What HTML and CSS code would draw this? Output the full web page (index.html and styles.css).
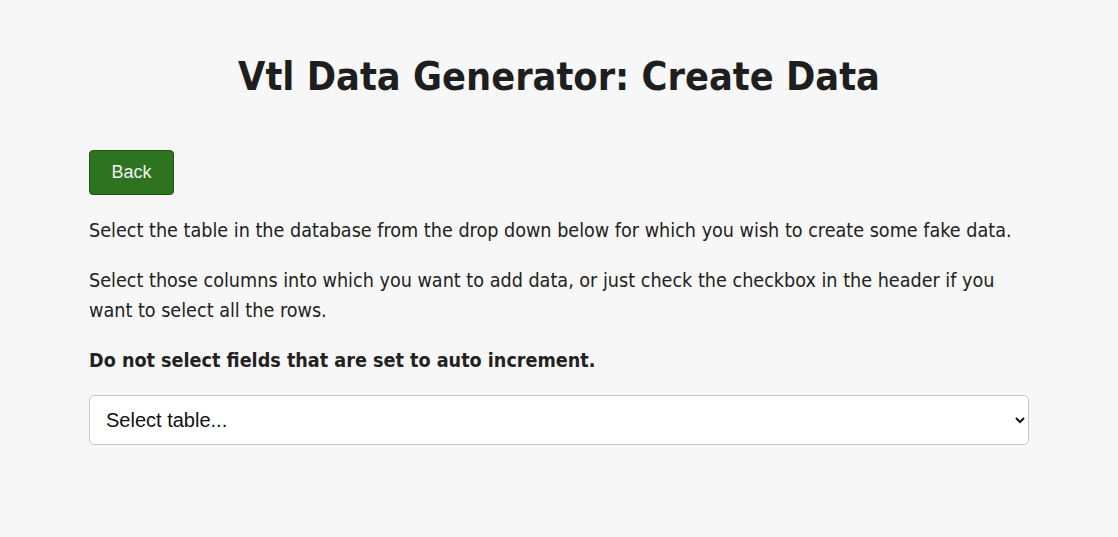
FILE: index.html
```html
<!DOCTYPE html>
<html lang="en">
<head>
<meta charset="utf-8">
<title>Vtl Data Generator: Create Data</title>
<link rel="stylesheet" href="styles.css">
</head>
<body>
<main class="page">
  <h1 class="title">Vtl Data Generator: Create Data</h1>
  <div class="actions">
    <button class="btn-back" type="button">Back</button>
  </div>
  <p class="text">Select the table in the database from the drop down below for which you wish to create some fake data.</p>
  <p class="text">Select those columns into which you want to add data, or just check the checkbox in the header if you want to select all the rows.</p>
  <p class="text strong">Do not select fields that are set to auto increment.</p>
  <select class="table-select">
    <option>Select table...</option>
  </select>
</main>
</body>
</html>
```
FILE: styles.css
```css
html, body {
  margin: 0;
  padding: 0;
  background: #f7f7f7;
}
body {
  font-family: "DejaVu Sans Condensed", "DejaVu Sans", sans-serif;
  color: #222;
}
.page {
  width: 940px;
  margin: 0 auto;
  padding-top: 52px;
}
.title {
  margin: 0 0 48px;
  text-align: center;
  font-size: 39.3px;
  line-height: 50px;
  font-weight: bold;
  color: #1e1e1e;
}
.actions {
  display: flex;
  margin-bottom: 21px;
}
.btn-back {
  width: 85px;
  height: 45px;
  background: #2e7420;
  border: 1px solid #1f5415;
  border-radius: 4px;
  color: #f2f2f2;
  font-family: "Liberation Sans", Arial, sans-serif;
  font-size: 18px;
  padding: 0;
}
.text {
  margin: 0 0 20px;
  font-size: 19.6px;
  line-height: 30px;
}
.strong {
  font-weight: bold;
  margin-bottom: 19px;
}
.table-select {
  display: block;
  width: 940px;
  height: 50px;
  box-sizing: border-box;
  background: #fff;
  border: 1px solid #c8c8c8;
  border-radius: 5px;
  padding: 0 12px;
  font-family: "Liberation Sans", Arial, sans-serif;
  font-size: 20px;
  color: #111;
}
```
